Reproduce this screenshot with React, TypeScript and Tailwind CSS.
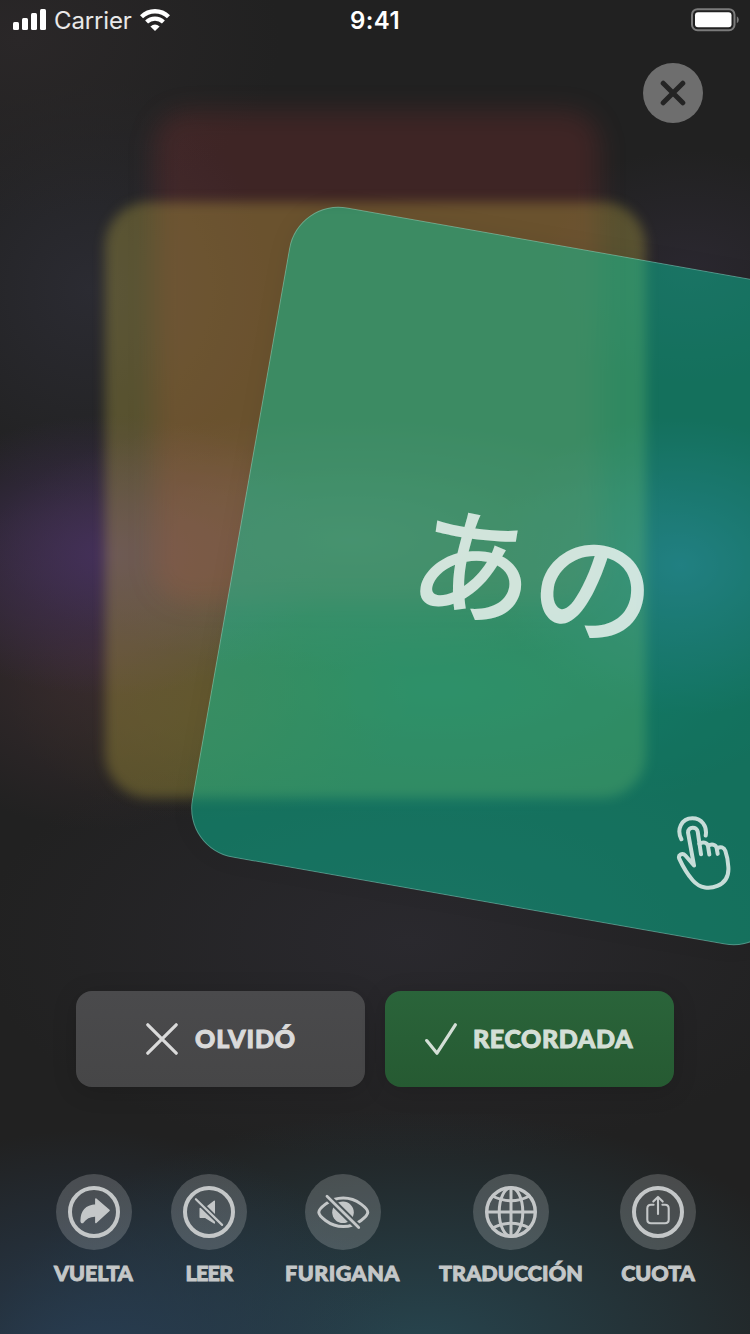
import React from "react";

type Tool = { label: string; width: string; tracking: string; icon: React.ReactNode };

const Ring = () => <circle cx="38" cy="38" r="24" strokeWidth="4" />;

const tools: Tool[] = [
  {
    label: "VUELTA",
    width: "w-[79px]",
    tracking: "tracking-[-0.1px]",
    icon: (
      <>
        <Ring />
        <path
          d="M39.9 25 L53 36.4 L39.9 48.4 V42 C33.5 41.6 30 43.8 26.8 48.4 C25.8 48.8 25.2 48.2 25.2 47 C25.2 37 30 31.6 39.9 31 Z"
          fill="currentColor"
          strokeWidth="1.6"
        />
      </>
    ),
  },
  {
    label: "LEER",
    width: "w-[76px]",
    tracking: "tracking-[-0.7px]",
    icon: (
      <>
        <mask id="mute-cut">
          <rect width="76" height="76" fill="white" stroke="none" />
          <path d="M24.7 25 L51.3 51" stroke="black" strokeWidth="5.6" />
        </mask>
        <Ring />
        <path
          d="M29.2 34.5 H34 L43.3 27.2 V49 L34 43.2 H29.2 Z"
          fill="currentColor"
          strokeWidth="1.4"
          mask="url(#mute-cut)"
        />
        <path d="M24.9 25.2 L51.1 50.9" strokeWidth="2.2" />
      </>
    ),
  },
  {
    label: "FURIGANA",
    width: "w-[115px]",
    tracking: "tracking-[0.5px]",
    icon: (
      <>
        <mask id="eye-cut">
          <rect width="76" height="76" fill="white" stroke="none" />
          <path d="M19.7 20 L56 56" stroke="black" strokeWidth="7" />
        </mask>
        <g mask="url(#eye-cut)">
          <path
            d="M13.8 38.3 C13.8 35.5 23.5 24.1 38.3 24.1 C53 24.1 62.8 35.5 62.8 38.3 C62.8 41.1 53 52.5 38.3 52.5 C23.5 52.5 13.8 41.1 13.8 38.3 Z"
            strokeWidth="3"
          />
          <circle cx="38" cy="38.3" r="10.8" fill="currentColor" stroke="none" />
        </g>
        <path d="M22 22.3 L53.7 53.6" strokeWidth="2.8" />
      </>
    ),
  },
  {
    label: "TRADUCCIÓN",
    width: "w-[146px] -mr-0.5",
    tracking: "tracking-[0.1px]",
    icon: (
      <>
        <circle cx="38" cy="38" r="24.3" strokeWidth="3.4" />
        <ellipse cx="38" cy="38" rx="11.8" ry="24.3" strokeWidth="3" />
        <path d="M38 14 V62 M14 38 H62" strokeWidth="3" />
        <path d="M19.5 22 Q38 31.6 56.5 22 M19.5 54 Q38 44.4 56.5 54" strokeWidth="3" />
      </>
    ),
  },
  {
    label: "CUOTA",
    width: "w-[76px]",
    tracking: "tracking-[0px]",
    icon: (
      <>
        <Ring />
        <path
          d="M33.6 30.7 H31 Q27.3 30.7 27.3 34.4 V45.6 Q27.3 49.3 31 49.3 H45 Q48.7 49.3 48.7 45.6 V34.4 Q48.7 30.7 45 30.7 H42.4"
          strokeWidth="2.1"
        />
        <path d="M38 40 V23 M33.3 27.6 L38 22.9 L42.7 27.6" strokeWidth="2.1" />
      </>
    ),
  },
];

function StatusBar() {
  return (
    <header className="grid h-10 w-full grid-cols-3 items-center font-['Inter',sans-serif] text-white">
      <div className="flex items-center pl-[13px]">
        <svg width="34" height="22" viewBox="0 0 34 22" fill="currentColor">
          <rect x="0" y="13" width="6" height="8" rx="1.5" />
          <rect x="9" y="9" width="6" height="12" rx="1.5" />
          <rect x="18" y="4" width="6" height="17" rx="1.5" />
          <rect x="27" y="0" width="6" height="21" rx="1.5" />
        </svg>
        <span className="ml-[7px] mt-0.5 w-[78px] whitespace-nowrap text-[24px] leading-none tracking-[-0.15px] text-white/90">Carrier</span>
        <svg className="ml-2" width="30" height="22" viewBox="0 0 30 22" fill="none" stroke="currentColor">
          <path d="M1.5 7.8 A19.3 19.3 0 0 1 28.5 7.8" strokeWidth="4.4" />
          <path d="M6.6 13 A12 12 0 0 1 23.4 13" strokeWidth="4.2" />
          <path d="M15 22 L10.4 17.4 Q15 13.6 19.6 17.4 Z" fill="currentColor" stroke="none" />
        </svg>
      </div>
      <span className="mt-0.5 text-center text-[24px] font-semibold leading-none tracking-[0.4px]">9:41</span>
      <div className="flex justify-end pr-[11px]">
        <svg width="49" height="24" viewBox="0 0 49 24">
          <rect x="2" y="1.2" width="42.5" height="21" rx="5.5" fill="none" stroke="#7b7b7b" strokeWidth="2" />
          <rect x="5" y="4.2" width="36.5" height="15" rx="3" fill="#fff" />
          <path d="M46.8 8.2 Q48.8 9.2 48.8 11.7 Q48.8 14.2 46.8 15.2 Z" fill="#7b7b7b" />
        </svg>
      </div>
    </header>
  );
}

function Backdrop() {
  return (
    <div className="absolute inset-0 bg-[#212121]">
      <div className="absolute inset-0 bg-[radial-gradient(ellipse_260px_180px_at_20px_40px,#2a2728,transparent),radial-gradient(ellipse_200px_210px_at_90px_290px,#2b2b32,transparent),radial-gradient(ellipse_430px_220px_at_410px_940px,#2a292e,transparent),radial-gradient(ellipse_170px_120px_at_690px_270px,#2b2830,transparent)]" />
      <div className="absolute inset-0 bg-[radial-gradient(ellipse_220px_140px_at_110px_555px,#44305a,transparent),radial-gradient(ellipse_190px_150px_at_680px_565px,#393e66,transparent),radial-gradient(ellipse_360px_130px_at_350px_540px,#433a4a,transparent),radial-gradient(ellipse_210px_170px_at_100px_660px,#392b2e,transparent),radial-gradient(ellipse_200px_120px_at_210px_700px,#322f1e,transparent),radial-gradient(ellipse_380px_130px_at_440px_690px,#1b3436,transparent)]" />
      <div className="absolute inset-0 bg-[radial-gradient(ellipse_320px_240px_at_90px_1370px,#283e54,transparent),radial-gradient(ellipse_430px_240px_at_420px_1350px,#27454f,transparent)]" />
    </div>
  );
}

function CardStack() {
  return (
    <div className="absolute inset-0">
      <div className="absolute left-[154px] top-[111px] h-[491px] w-[446px] rounded-[34px] bg-[#a83636]/21 blur-[12px]" />
      <div className="absolute left-[105px] top-[202px] h-[596px] w-[541px] rounded-[44px] bg-[#e2cd48]/27 blur-[6px]" />
      <div className="absolute left-[235.6px] top-[245.8px] flex h-[660px] w-[600px] rotate-[10deg] items-center justify-center rounded-[50px] border border-white/25 bg-[#05d1a4]/45 shadow-[0_0_24px_rgba(0,0,0,0.06)]">
        <span
          lang="ja"
          className="-mt-3 -ml-1 font-['Noto_Sans_CJK_JP',sans-serif] text-[122px] font-medium leading-none text-white/76"
        >
          あの
        </span>
        <svg
          className="absolute left-[482px] top-[533px] -rotate-[10deg] text-white opacity-76"
          width="63.3"
          height="80"
          viewBox="100 70 190 240"
          fill="none"
          stroke="currentColor"
          strokeWidth="12"
          strokeLinecap="round"
          strokeLinejoin="round"
        >
          <path d="M124 147 C109 118 124 84 157 84 C185 84 202 108 197 136" />
          <path d="M183 192 L173 124 C171 108 144 108 144 127 L162 226 L136 196 C127 186 113 194 118 206 C129 230 143 253 158 270 C180 296 210 296 232 287 C256 277 267 256 265 230 C264 213 261 196 256 182 C252 171 241 168 233 174" />
          <path d="M178 161 C188 153 202 156 204 168 L208 193 M204 168 C213 160 228 162 230 174 L233 191" />
        </svg>
      </div>
    </div>
  );
}

export default function App() {
  return (
    <main className="relative h-[1334px] w-[750px] overflow-hidden bg-[#212121]">
      <Backdrop />
      <CardStack />
      <div className="relative flex h-full flex-col">
        <StatusBar />
        <div className="flex justify-end pr-[47px] pt-[23px]">
          <button aria-label="Cerrar" className="flex size-[60px] items-center justify-center rounded-full bg-[#6e6e6e] text-[#242424]">
            <svg width="26" height="26" viewBox="0 0 26 26" stroke="currentColor" strokeWidth="5" strokeLinecap="round">
              <path d="M3.2 3.2 L22.8 22.8 M22.8 3.2 L3.2 22.8" />
            </svg>
          </button>
        </div>
        <div className="mt-auto flex gap-5 px-[76px] font-['Lato',sans-serif] text-[25px] font-black leading-none [-webkit-text-stroke:1px_currentColor]">
          <button className="flex h-24 w-[289px] items-center rounded-2xl bg-linear-to-b from-[#4a4a4c] to-[#464647] pl-[70px] text-[#dadada] shadow-[0_4px_24px_rgba(0,0,0,0.15)]">
            <svg width="32" height="32" viewBox="0 0 32 32" stroke="currentColor" strokeWidth="3.2" strokeLinecap="round">
              <path d="M1.8 1.8 L30.2 30.2 M30.2 1.8 L1.8 30.2" />
            </svg>
            <span className="-mt-0.5 ml-[17px] whitespace-nowrap tracking-[0.9px]">OLVIDÓ</span>
          </button>
          <button className="flex h-24 w-[289px] items-center rounded-2xl bg-linear-to-b from-[#2a643a] to-[#265a32] pl-10 text-[#d4dfd6] shadow-[0_4px_24px_rgba(0,0,0,0.15)]">
            <svg width="32" height="32" viewBox="0 0 32 32" fill="none" stroke="currentColor" strokeWidth="3.2" strokeLinecap="round" strokeLinejoin="round">
              <path d="M1.7 17.6 L12 30.2 L30.3 1.8" />
            </svg>
            <span className="-mt-0.5 ml-4 whitespace-nowrap tracking-[0.6px]">RECORDADA</span>
          </button>
        </div>
        <nav className="mb-[44px] mt-[87px] flex gap-[38px] pl-[54px] font-['Lato',sans-serif] text-[21.5px] font-black leading-none text-[#c4c7c8] [-webkit-text-stroke:0.9px_currentColor]">
          {tools.map((tool) => (
            <div key={tool.label} className={`flex h-[116px] flex-col items-center ${tool.width}`}>
              <span className="flex size-[76px] shrink-0 rounded-full bg-white/18">
                <svg
                  width="76"
                  height="76"
                  viewBox="0 0 76 76"
                  fill="none"
                  stroke="currentColor"
                  strokeLinecap="round"
                  strokeLinejoin="round"
                >
                  {tool.icon}
                </svg>
              </span>
              <span className={`mt-[13px] whitespace-nowrap ${tool.tracking}`}>{tool.label}</span>
            </div>
          ))}
        </nav>
      </div>
    </main>
  );
}
